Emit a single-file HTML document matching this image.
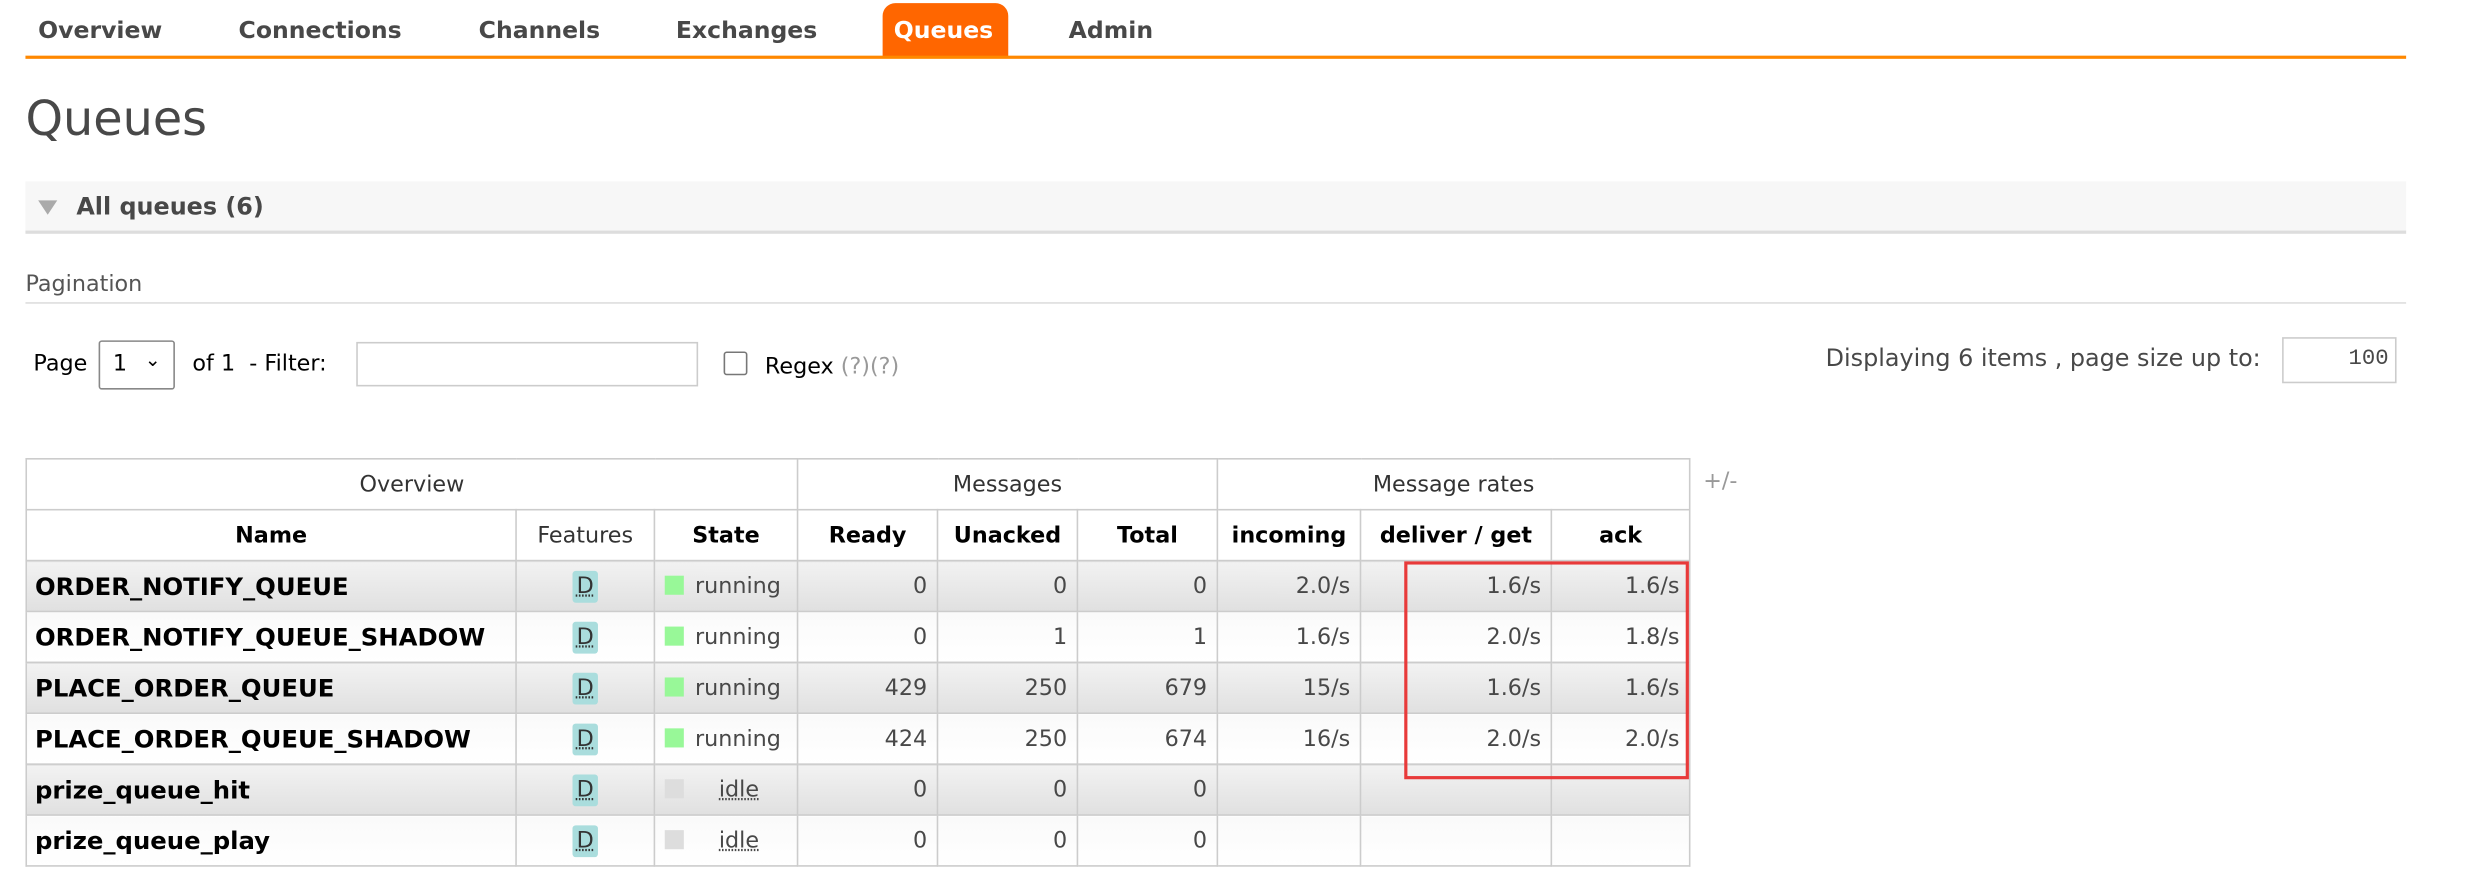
<!DOCTYPE html>
<html><head><meta charset="utf-8"><style>
html,body{margin:0;padding:0;background:#fff;width:2465px;height:889px;overflow:hidden}
#w{position:absolute;left:0;top:0;width:1550px;height:559px;transform:scale(1.5903);transform-origin:0 0;font-family:"DejaVu Sans","Liberation Sans",sans-serif;color:#484848}
.a{position:absolute;white-space:nowrap}
.nav{font-weight:bold;font-size:14.8px;color:#484848;top:11px}
table{position:absolute;left:16px;top:288px;border-collapse:collapse;font-size:14px;table-layout:fixed;width:1046px}
td,th{border:1px solid #ccc;padding:0 6px;height:31px;white-space:nowrap;overflow:visible}
th{font-weight:bold;color:#000;background:#fff}
th.n{font-weight:normal;color:#333}
td{text-align:right;color:#484848}
td.nm{text-align:left;font-weight:bold;color:#000;font-size:15.3px;padding-left:5px}
tr.o td{background:linear-gradient(#f2f2f2,#e0e0e0)}
tr.e td{background:linear-gradient(#fafafa,#fff)}
.d{display:inline-block;background:#aadddd;border-radius:2px;padding:2px 3px;color:#333;text-decoration:underline dotted;line-height:16px}
td.c{text-align:center}
td.s{text-align:left;padding-left:6px}
.sq{display:inline-block;width:12px;height:12px;background:#98f898;vertical-align:-1px;margin-right:7px}
.sq.i{background:#ddd;margin-right:22px}
.idle{text-decoration:underline dotted}
</style></head><body><div id="w">
<div class="a nav" style="left:24px">Overview</div>
<div class="a nav" style="left:150px">Connections</div>
<div class="a nav" style="left:301px">Channels</div>
<div class="a nav" style="left:425px">Exchanges</div>
<div class="a" style="left:555px;top:2px;width:79px;height:34px;background:#f60;border-radius:8px 8px 0 0"></div>
<div class="a nav" style="left:562px;color:#fff">Queues</div>
<div class="a nav" style="left:672px">Admin</div>
<div class="a" style="left:16px;top:35px;width:1497px;height:2px;background:#f80"></div>
<div class="a" style="left:16px;top:58px;font-size:30px;color:#484848">Queues</div>
<div class="a" style="left:16px;top:114px;width:1497px;height:31px;background:#f7f7f7;border-bottom:2px solid #ddd"></div>
<div class="a" style="left:24px;top:126px;width:0;height:0;border-left:6px solid transparent;border-right:6px solid transparent;border-top:9px solid #aaa"></div>
<div class="a" style="left:48px;top:121px;font-size:15px;font-weight:bold;color:#484848">All queues (6)</div>
<div class="a" style="left:16px;top:171px;font-size:14px;color:#555">Pagination</div>
<div class="a" style="left:16px;top:190px;width:1497px;height:1px;background:#ddd"></div>
<div class="a" style="left:21px;top:221px;font-size:14px;color:#000">Page</div>
<div class="a" style="left:62px;top:214px;width:46px;height:29px;border:1px solid #888;border-radius:2px;font-size:14px;color:#000"><span style="position:absolute;left:8px;top:6px">1</span><span style="position:absolute;left:28px;top:4px;font-size:12px">&#8964;</span></div>
<div class="a" style="left:121px;top:221px;font-size:14px;color:#000">of 1 &nbsp;- Filter:</div>
<div class="a" style="left:224px;top:215px;width:213px;height:26px;border:1px solid #ccc"></div>
<div class="a" style="left:455px;top:221px;width:13px;height:13px;border:1px solid #777;border-radius:2px"></div>
<div class="a" style="left:481px;top:223px;font-size:14px;color:#000">Regex <span style="color:#999">(?)(?)</span></div>
<div class="a" style="left:1148px;top:216px;font-size:15px;color:#484848">Displaying 6 items , page size up to:</div>
<div class="a" style="left:1435px;top:212px;width:70px;height:27px;border:1px solid #ccc;font-size:14px;text-align:right"><span style="position:absolute;right:4px;top:5px;font-family:'Liberation Mono',monospace">100</span></div>
<table>
<colgroup><col style="width:308px"><col style="width:87px"><col style="width:90px"><col style="width:88px"><col style="width:88px"><col style="width:88px"><col style="width:90px"><col style="width:120px"><col style="width:87px"></colgroup>
<tr><th class="n" colspan="3">Overview</th><th class="n" colspan="3">Messages</th><th class="n" colspan="3">Message rates</th></tr>
<tr><th>Name</th><th class="n">Features</th><th>State</th><th>Ready</th><th>Unacked</th><th>Total</th><th>incoming</th><th>deliver / get</th><th>ack</th></tr>
<tr class="o"><td class="nm">ORDER_NOTIFY_QUEUE</td><td class="c"><span class="d">D</span></td><td class="s"><span class="sq"></span>running</td><td>0</td><td>0</td><td>0</td><td>2.0/s</td><td>1.6/s</td><td>1.6/s</td></tr>
<tr class="e"><td class="nm">ORDER_NOTIFY_QUEUE_SHADOW</td><td class="c"><span class="d">D</span></td><td class="s"><span class="sq"></span>running</td><td>0</td><td>1</td><td>1</td><td>1.6/s</td><td>2.0/s</td><td>1.8/s</td></tr>
<tr class="o"><td class="nm">PLACE_ORDER_QUEUE</td><td class="c"><span class="d">D</span></td><td class="s"><span class="sq"></span>running</td><td>429</td><td>250</td><td>679</td><td>15/s</td><td>1.6/s</td><td>1.6/s</td></tr>
<tr class="e"><td class="nm">PLACE_ORDER_QUEUE_SHADOW</td><td class="c"><span class="d">D</span></td><td class="s"><span class="sq"></span>running</td><td>424</td><td>250</td><td>674</td><td>16/s</td><td>2.0/s</td><td>2.0/s</td></tr>
<tr class="o"><td class="nm">prize_queue_hit</td><td class="c"><span class="d">D</span></td><td class="s"><span class="sq i"></span><span class="idle">idle</span></td><td>0</td><td>0</td><td>0</td><td></td><td></td><td></td></tr>
<tr class="e"><td class="nm">prize_queue_play</td><td class="c"><span class="d">D</span></td><td class="s"><span class="sq i"></span><span class="idle">idle</span></td><td>0</td><td>0</td><td>0</td><td></td><td></td><td></td></tr>
</table>
<div class="a" style="left:1071px;top:295px;font-size:14px;color:#999">+/-</div>
<div class="a" style="left:883px;top:353px;width:175px;height:133px;border:2px solid #e83a3a"></div>
</div></body></html>
